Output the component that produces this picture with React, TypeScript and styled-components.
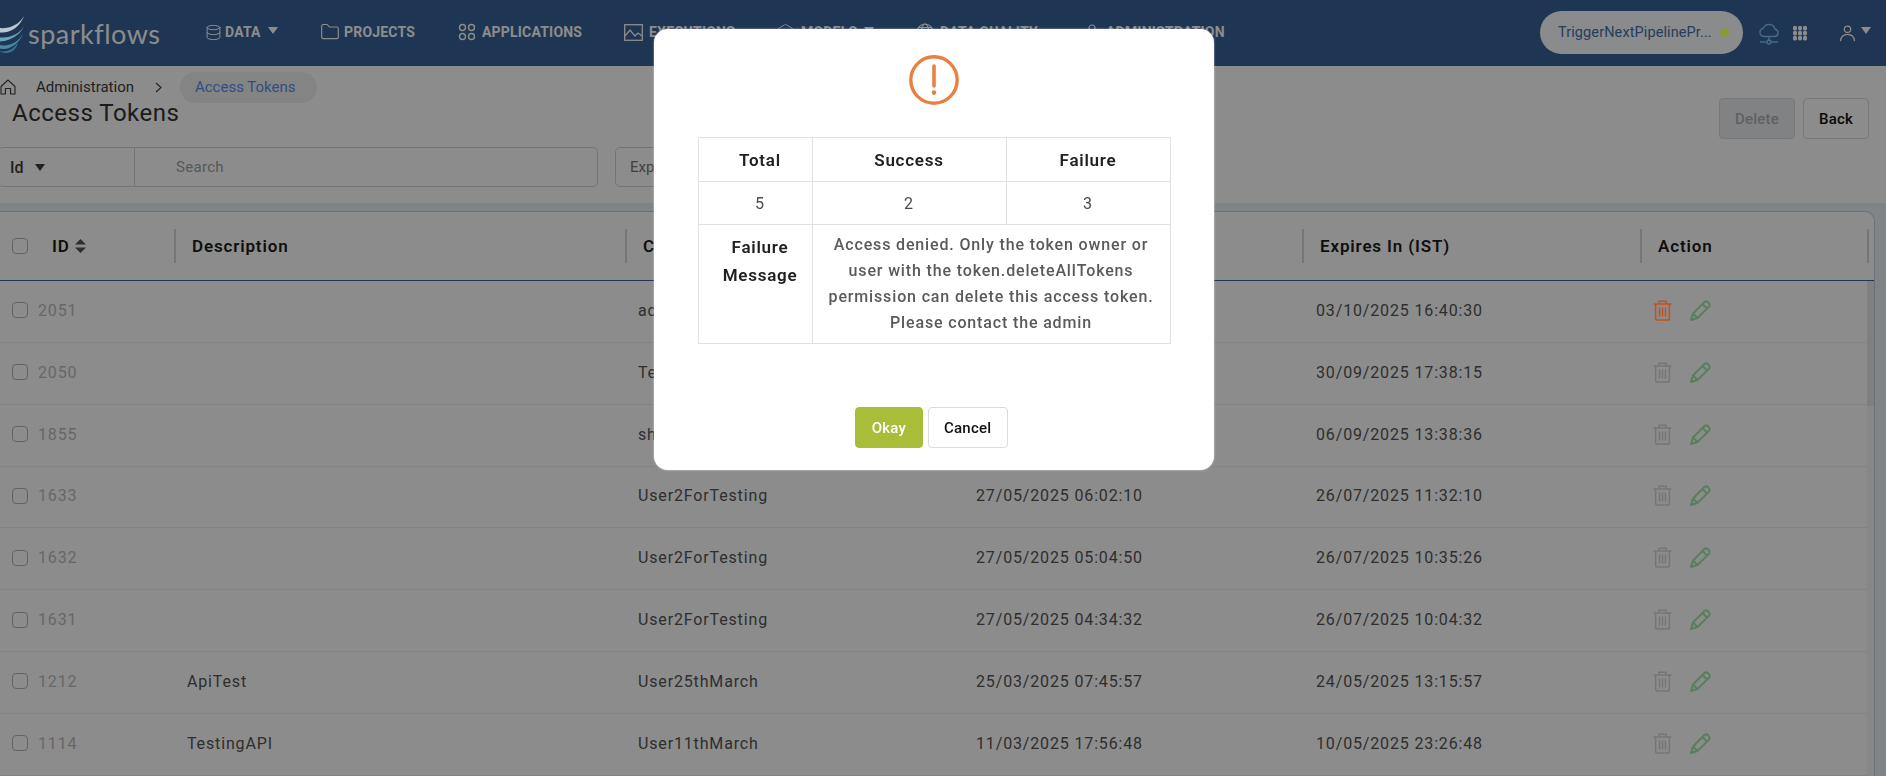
import React from 'react';
import styled, { createGlobalStyle } from 'styled-components';
import { Database, Folder, Hexagon } from 'lucide-react';

const GlobalStyle = createGlobalStyle`
  html, body {
    margin: 0;
    padding: 0;
    background: #fff;
    font-family: Roboto, "Liberation Sans", sans-serif;
  }
`;

const Page = styled.div`
  width: 1886px;
  height: 776px;
  overflow: hidden;
  display: flex;
  flex-direction: column;
  background: #fff;
`;

const TopBar = styled.header`
  height: 66px;
  flex: none;
  display: flex;
  align-items: center;
  background: #386199;
  color: #fff;
  white-space: nowrap;
`;

const LogoMark = styled.svg`
  position: relative;
  z-index: 20;
  width: 34px;
  height: 38px;
  margin: 3px 0 0 -9px;
  flex: none;
`;

const LogoText = styled.span`
  font-family: Lato, "Open Sans", sans-serif;
  font-size: 27px;
  letter-spacing: 0.5px;
  margin-left: 3px;
  width: 177px;
  flex: none;
`;

const NavItem = styled.a<{ $width: number }>`
  display: flex;
  align-items: center;
  gap: 6px;
  width: ${(p) => p.$width}px;
  flex: none;
  margin-top: -2px;
  font-size: 14px;
  font-weight: 700;
  letter-spacing: 0.2px;
  color: #fff;
`;

const NavText = styled.span<{ $nudge: number }>`
  margin-left: ${(p) => p.$nudge}px;
`;

const Caret = styled.span<{ $size?: number; $drop?: number }>`
  width: 0;
  height: 0;
  border-left: ${(p) => p.$size ?? 5}px solid transparent;
  border-right: ${(p) => p.$size ?? 5}px solid transparent;
  border-top: ${(p) => ((p.$size ?? 5) * 7) / 5}px solid currentColor;
  margin-left: ${(p) => (p.$drop === 0 ? 0 : 1)}px;
  margin-bottom: ${(p) => p.$drop ?? 4}px;
`;

const TopRight = styled.div`
  margin-left: auto;
  display: flex;
  align-items: center;
  padding-right: 15px;
  color: #fff;
`;

const EnvPill = styled.div`
  width: 203px;
  height: 43px;
  margin-top: -2px;
  box-sizing: border-box;
  border-radius: 22px;
  background: #fbfeff;
  color: #466fa8;
  padding: 0 14px 0 18px;
  display: flex;
  align-items: center;
  justify-content: space-between;
  font-size: 14.5px;
  letter-spacing: 0.1px;
`;

const EnvDot = styled.span`
  position: relative;
  z-index: 20;
  width: 9px;
  height: 9px;
  border-radius: 50%;
  background: #8a973c;
`;

const TopIcon = styled.svg<{ $gap: number }>`
  margin-left: ${(p) => p.$gap}px;
  flex: none;
`;

const UserSlot = styled.span`
  margin-left: 32px;
  display: flex;
`;

const UserCaret = styled(Caret)`
  margin-left: 5px;
  margin-bottom: 5px;
`;

const Crumbs = styled.nav`
  margin-top: 5px;
  height: 32px;
  flex: none;
  display: flex;
  align-items: center;
  font-size: 15px;
  color: #3c3c3c;
`;

const CrumbLabel = styled.span`
  margin-left: 20px;
`;

const CrumbSep = styled.svg`
  margin: 0 18px 0 21px;
`;

const CrumbPill = styled.span`
  height: 31px;
  display: flex;
  align-items: center;
  padding: 0 21px 0 15px;
  border-radius: 16px;
  background: #f1f1f1;
  color: #5a8cf0;
`;

const TitleRow = styled.div`
  height: 41px;
  flex: none;
  display: flex;
  justify-content: space-between;
  padding: 0 17px 0 12px;
  margin-top: -5px;
`;

const Title = styled.h1`
  margin: 1px 0 0;
  font-size: 24px;
  line-height: 28px;
  font-weight: 400;
  letter-spacing: 0.5px;
  color: #333;
`;

const TitleActions = styled.div`
  display: flex;
  gap: 8px;
`;

const Button = styled.button<{ $kind: 'disabled' | 'outline' | 'primary' }>`
  height: 41px;
  box-sizing: border-box;
  border-radius: 4px;
  font-family: inherit;
  font-size: 15px;
  font-weight: 500;
  letter-spacing: 0.2px;
  padding: 0 15px;
  border: 1px solid ${(p) => (p.$kind === 'primary' ? '#aabd38' : '#d9dbe1')};
  background: ${(p) => (p.$kind === 'primary' ? '#aabd38' : p.$kind === 'disabled' ? '#eaedf0' : '#fff')};
  color: ${(p) => (p.$kind === 'primary' ? '#fff' : p.$kind === 'disabled' ? '#b0b0b0' : '#111')};
`;

const FilterRow = styled.div`
  margin-top: 8px;
  height: 40px;
  flex: none;
  display: flex;
  margin-left: -2px;
`;

const FilterField = styled.div`
  width: 136px;
  box-sizing: border-box;
  display: flex;
  align-items: center;
  gap: 11px;
  padding-left: 11px;
  border: 1px solid #d4d4d4;
  border-right: none;
  border-radius: 5px 0 0 5px;
  font-size: 16px;
  font-weight: 500;
  color: #3c3c3c;
`;

const SearchBox = styled.div`
  width: 464px;
  box-sizing: border-box;
  display: flex;
  align-items: center;
  padding-left: 41px;
  border: 1px solid #d4d4d4;
  border-radius: 0 5px 5px 0;
  font-size: 15px;
  letter-spacing: 0.3px;
  color: #a0a0a0;
`;

const ExpiryBox = styled.div`
  margin-left: 17px;
  width: 300px;
  box-sizing: border-box;
  display: flex;
  align-items: center;
  padding-left: 14px;
  border: 1px solid #d4d4d4;
  border-radius: 5px;
  font-size: 15px;
  color: #777;
`;

const TableBand = styled.section`
  margin-top: 16px;
  flex: 1;
  min-height: 0;
  display: flex;
  background: #e8f1f6;
  padding: 8px 11px 0 0;
`;

const TableCard = styled.div`
  flex: 1;
  margin-left: -1px;
  display: flex;
  flex-direction: column;
  background: #fff;
  border: 1px solid #bcd0e2;
  border-bottom: none;
  border-radius: 0 10px 0 0;
  min-width: 0;
`;

const HeadRow = styled.div`
  height: 69px;
  flex: none;
  box-sizing: border-box;
  display: grid;
  grid-template-columns: 174px 451px 339px 338px 338px 227px 1fr;
  align-items: center;
  border-bottom: 1px solid #386199;
  font-size: 17px;
  font-weight: 600;
  letter-spacing: 0.85px;
  color: #1c1c1c;
`;

const HeadCell = styled.div`
  height: 34px;
  display: flex;
  align-items: center;
  padding-left: 16px;
  border-left: 2px solid #d8d8d8;
`;

const HeadFirst = styled.div`
  display: flex;
  align-items: center;
  padding-left: 12px;
`;

const HeadId = styled.span`
  margin-left: 24px;
  margin-right: 5px;
`;

const SortMark = styled.svg`
  display: block;
`;

const CheckBox = styled.span`
  width: 16px;
  height: 16px;
  box-sizing: border-box;
  border: 1.5px solid #b5b5b5;
  border-radius: 4px;
  flex: none;
`;

const Body = styled.div`
  position: relative;
  flex: 1;
  overflow: hidden;
`;

const Row = styled.div`
  height: 61.85px;
  box-sizing: border-box;
  display: grid;
  grid-template-columns: 187px 451px 338px 340px 337px 1fr;
  align-items: center;
  padding-bottom: 2px;
  border-bottom: 1px solid #eee;
  font-size: 16px;
  letter-spacing: 0.85px;
  color: #555;
`;

const IdCell = styled.div`
  display: flex;
  align-items: center;
  gap: 10px;
  padding-left: 12px;
  color: #bcbcbc;
`;

const Actions = styled.div`
  display: flex;
  align-items: center;
  gap: 18px;
`;

const TrashIcon = styled.svg<{ $active: boolean }>`
  position: relative;
  z-index: ${(p) => (p.$active ? 20 : 'auto')};
  color: ${(p) => (p.$active ? '#c2521c' : '#d6d6d6')};
`;

const PencilIcon = styled.svg`
  color: #a2e6aa;
`;

const ScrollTrack = styled.div`
  position: absolute;
  top: 0;
  right: 0;
  bottom: 0;
  width: 7px;
  background: #f6f6f6;
`;

const ScrollThumb = styled.div`
  height: 125px;
  background: #e8e8e8;
`;

const Backdrop = styled.div`
  position: fixed;
  inset: 0;
  z-index: 10;
  background: rgba(0, 0, 0, 0.45);
  display: flex;
  justify-content: center;
  align-items: flex-start;
  padding: 29px 18px 0 0;
`;

const Modal = styled.div`
  width: 560px;
  height: 441px;
  box-sizing: border-box;
  background: #fff;
  border-radius: 14px;
  box-shadow: 0 0 2px rgba(255, 255, 255, 0.7);
  display: flex;
  flex-direction: column;
  align-items: center;
  padding-top: 26px;
`;

const AlertIcon = styled.svg`
  flex: none;
  color: #e8803f;
`;

const ResultTable = styled.table`
  margin-top: 32px;
  width: 473px;
  table-layout: fixed;
  border-collapse: collapse;
  font-size: 16px;
  letter-spacing: 0.85px;
  color: #4b4b4b;
  text-align: center;

  tr > :first-child {
    padding-left: 10px;
  }
`;

const ResultHead = styled.th<{ $width?: number }>`
  border: 1px solid #dee2e6;
  width: ${(p) => (p.$width ? `${p.$width}px` : 'auto')};
  height: 43px;
  padding: 0;
  font-size: 17px;
  font-weight: 600;
  letter-spacing: 0.75px;
  color: #212121;
`;

const ResultCell = styled.td`
  border: 1px solid #dee2e6;
  height: 42px;
  padding: 0;
`;

const FailureLabel = styled.th`
  border: 1px solid #dee2e6;
  vertical-align: top;
  padding: 8px 0 0;
  font-size: 17px;
  line-height: 28px;
  font-weight: 600;
  letter-spacing: 0.75px;
  color: #212121;
`;

const FailureText = styled.td`
  border: 1px solid #dee2e6;
  padding: 6px 10px 7px;
  height: 119px;
  box-sizing: border-box;
  line-height: 26px;
  font-weight: 500;
  color: #5a5a5a;
`;

const ModalActions = styled.div`
  margin-top: 63px;
  margin-right: 5px;
  display: flex;
  gap: 5px;

  button {
    padding: 0 15.5px;
  }
`;

const rows = [
  { id: 2051, desc: '', user: 'accessUser', created: '04/08/2025 11:10:30', expires: '03/10/2025 16:40:30' },
  { id: 2050, desc: '', user: 'Test', created: '01/08/2025 12:08:15', expires: '30/09/2025 17:38:15' },
  { id: 1855, desc: '', user: 'shared', created: '08/07/2025 08:08:36', expires: '06/09/2025 13:38:36' },
  { id: 1633, desc: '', user: 'User2ForTesting', created: '27/05/2025 06:02:10', expires: '26/07/2025 11:32:10' },
  { id: 1632, desc: '', user: 'User2ForTesting', created: '27/05/2025 05:04:50', expires: '26/07/2025 10:35:26' },
  { id: 1631, desc: '', user: 'User2ForTesting', created: '27/05/2025 04:34:32', expires: '26/07/2025 10:04:32' },
  { id: 1212, desc: 'ApiTest', user: 'User25thMarch', created: '25/03/2025 07:45:57', expires: '24/05/2025 13:15:57' },
  { id: 1114, desc: 'TestingAPI', user: 'User11thMarch', created: '11/03/2025 17:56:48', expires: '10/05/2025 23:26:48' }
];

function AppsIcon(): React.JSX.Element {
  return (
    <svg width="18" height="18" viewBox="0 0 18 18" fill="none" stroke="currentColor" strokeWidth="1.4">
      <circle cx="4.5" cy="4.5" r="3" />
      <circle cx="13.5" cy="4.5" r="3" />
      <circle cx="4.5" cy="13.5" r="3" />
      <circle cx="13.5" cy="13.5" r="3" />
    </svg>
  );
}

function ChartIcon(): React.JSX.Element {
  return (
    <svg width="19" height="17" viewBox="0 0 19 17" fill="none" stroke="currentColor" strokeWidth="1.3">
      <rect x="0.7" y="0.7" width="17.6" height="15.6" />
      <path d="M1 12l5-6 5 6 3-3 4 3" />
    </svg>
  );
}

function GlobeIcon(): React.JSX.Element {
  return (
    <svg width="18" height="18" viewBox="0 0 18 18" fill="none" stroke="currentColor" strokeWidth="1.2">
      <circle cx="9" cy="9" r="8" />
      <ellipse cx="9" cy="9" rx="3.6" ry="8" />
      <path d="M1 9h16M2.5 4.5h13M2.5 13.5h13" />
    </svg>
  );
}

function PersonIcon({ size }: { size: number }): React.JSX.Element {
  return (
    <svg width={size} height={size} viewBox="0 0 18 18" fill="none" stroke="currentColor" strokeWidth="1.3">
      <circle cx="9" cy="4.5" r="3.4" />
      <path d="M1.5 17c.6-4.6 3.6-7 7.5-7s6.9 2.4 7.5 7" />
    </svg>
  );
}

function TrashMark({ active }: { active: boolean }): React.JSX.Element {
  return (
    <TrashIcon $active={active} width="19" height="21" viewBox="0 0 19 21" fill="none" stroke="currentColor" strokeWidth="1.5">
      <path d="M.5 4h18M6 4V1.2h7V4" />
      <path d="M2.6 4v14.2c0 1 .7 1.8 1.7 1.8h10.4c1 0 1.7-.8 1.7-1.8V4" />
      <path d="M6.5 7.5v9M9.5 7.5v9M12.5 7.5v9" />
    </TrashIcon>
  );
}

function PencilMark(): React.JSX.Element {
  return (
    <PencilIcon width="21" height="21" viewBox="0 0 21 21" fill="none" stroke="currentColor" strokeWidth="2" strokeLinejoin="round">
      <path d="M1 20l2-6.5L14.2 2.3c1.2-1.2 2.6-1.2 3.8 0l.8.8c1.2 1.2 1.2 2.6 0 3.8L7.5 18z" />
      <path d="M3 13.5 7.5 18M12.5 4l4.6 4.6" />
    </PencilIcon>
  );
}

function App(): React.JSX.Element {
  return (
    <Page>
      <GlobalStyle />
      <TopBar>
        <LogoMark viewBox="0 0 34 38" fill="none">
          <path d="M33 0C28 9 18 13 8 12 3 12 0 14 0 18c5-2 11-1 16-2 8-2 14-8 17-16z" fill="#b9c9d2" />
          <path d="M33 10C28 19 17 23 7 21c-4 0-7 1-7 5 6-1 12 0 17-2 8-3 13-7 16-14z" fill="#67a9bb" />
          <path d="M32 17c-4 9-13 14-24 12-3 0-6 0-7 3 6 0 12 2 17 0 7-3 12-8 14-15z" fill="#4a8aa5" />
          <path d="M27 26c-3 6-10 11-19 9 7 4 17 2 19-9z" fill="#3a7594" />
        </LogoMark>
        <LogoText>sparkflows</LogoText>
        <NavItem $width={115}>
          <Database size={17} strokeWidth={1.4} />
          <NavText $nudge={-3}>DATA</NavText>
          <Caret />
        </NavItem>
        <NavItem $width={138}>
          <Folder size={20} strokeWidth={1.4} />
          <NavText $nudge={-2}>PROJECTS</NavText>
        </NavItem>
        <NavItem $width={166}>
          <AppsIcon />
          APPLICATIONS
        </NavItem>
        <NavItem $width={152}>
          <ChartIcon />
          EXECUTIONS
        </NavItem>
        <NavItem $width={140}>
          <Hexagon size={19} strokeWidth={1.2} />
          MODELS
          <Caret />
        </NavItem>
        <NavItem $width={168}>
          <GlobeIcon />
          DATA QUALITY
        </NavItem>
        <NavItem $width={150}>
          <PersonIcon size={16} />
          ADMINISTRATION
        </NavItem>
        <TopRight>
          <EnvPill>
            TriggerNextPipelinePr...
            <EnvDot />
          </EnvPill>
          <TopIcon $gap={16} width="20" height="23" viewBox="0 0 20 23" fill="none" stroke="#7fc0ff" strokeWidth="1.4">
            <path d="M5 14.5h10.5a3.7 3.7 0 0 0 .6-7.3A6.3 6.3 0 0 0 4.2 6.4 4.1 4.1 0 0 0 5 14.5z" />
            <path d="M10 14.5v5M1 20h6.6M12.4 20H19" />
            <circle cx="10" cy="20" r="2" />
          </TopIcon>
          <TopIcon $gap={14} width="14" height="15" viewBox="0 0 14 15" fill="#fff">
            {[0, 5, 10].map((y) =>
              [0, 5, 10].map((x) => <rect key={`${x}-${y}`} x={x} y={y} width="4" height="4.4" rx="1.4" />)
            )}
          </TopIcon>
          <UserSlot>
            <PersonIcon size={17} />
          </UserSlot>
          <UserCaret />
        </TopRight>
      </TopBar>

      <Crumbs>
        <svg width="16" height="16" viewBox="0 0 16 16" fill="none" stroke="#3c3c3c" strokeWidth="1.1">
          <path d="M1 7.5 8 1l7 6.5V15h-4.4V9.5H5.4V15H1z" />
        </svg>
        <CrumbLabel>Administration</CrumbLabel>
        <CrumbSep width="7" height="11" viewBox="0 0 7 11" fill="none" stroke="#3c3c3c" strokeWidth="1.1">
          <path d="M1 1l5 4.5L1 10" />
        </CrumbSep>
        <CrumbPill>Access Tokens</CrumbPill>
      </Crumbs>

      <TitleRow>
        <Title>Access Tokens</Title>
        <TitleActions>
          <Button $kind="disabled">Delete</Button>
          <Button $kind="outline">Back</Button>
        </TitleActions>
      </TitleRow>

      <FilterRow>
        <FilterField>
          Id
          <Caret $drop={0} />
        </FilterField>
        <SearchBox>Search</SearchBox>
        <ExpiryBox>Expires In</ExpiryBox>
      </FilterRow>

      <TableBand>
        <TableCard>
          <HeadRow>
            <HeadFirst>
              <CheckBox />
              <HeadId>ID</HeadId>
              <SortMark width="11" height="14" viewBox="0 0 11 14" fill="#555">
                <path d="M5.5 0 11 5.6H0zM0 8.4h11L5.5 14z" />
              </SortMark>
            </HeadFirst>
            <HeadCell>Description</HeadCell>
            <HeadCell>Created By</HeadCell>
            <HeadCell>Created On (IST)</HeadCell>
            <HeadCell>Expires In (IST)</HeadCell>
            <HeadCell>Action</HeadCell>
            <HeadCell />
          </HeadRow>
          <Body>
            {rows.map((row, index) => (
              <Row key={row.id}>
                <IdCell>
                  <CheckBox />
                  {row.id}
                </IdCell>
                <div>{row.desc}</div>
                <div>{row.user}</div>
                <div>{row.created}</div>
                <div>{row.expires}</div>
                <Actions>
                  <TrashMark active={index === 0} />
                  <PencilMark />
                </Actions>
              </Row>
            ))}
            <ScrollTrack>
              <ScrollThumb />
            </ScrollTrack>
          </Body>
        </TableCard>
      </TableBand>

      <Backdrop>
        <Modal>
          <AlertIcon width="50" height="50" viewBox="0 0 50 50" fill="none" stroke="currentColor">
            <circle cx="25" cy="25" r="23.2" strokeWidth="3.4" />
            <path d="M25 11v20" strokeWidth="3.6" strokeLinecap="round" />
            <circle cx="25" cy="37.6" r="2.3" fill="currentColor" stroke="none" />
          </AlertIcon>
          <ResultTable>
            <thead>
              <tr>
                <ResultHead $width={103}>Total</ResultHead>
                <ResultHead $width={193}>Success</ResultHead>
                <ResultHead>Failure</ResultHead>
              </tr>
            </thead>
            <tbody>
              <tr>
                <ResultCell>5</ResultCell>
                <ResultCell>2</ResultCell>
                <ResultCell>3</ResultCell>
              </tr>
              <tr>
                <FailureLabel>
                  Failure
                  <br />
                  Message
                </FailureLabel>
                <FailureText colSpan={2}>
                  Access denied. Only the token owner or user with the token.deleteAllTokens permission can delete this
                  access token. Please contact the admin
                </FailureText>
              </tr>
            </tbody>
          </ResultTable>
          <ModalActions>
            <Button $kind="primary">Okay</Button>
            <Button $kind="outline">Cancel</Button>
          </ModalActions>
        </Modal>
      </Backdrop>
    </Page>
  );
}

export default App;
